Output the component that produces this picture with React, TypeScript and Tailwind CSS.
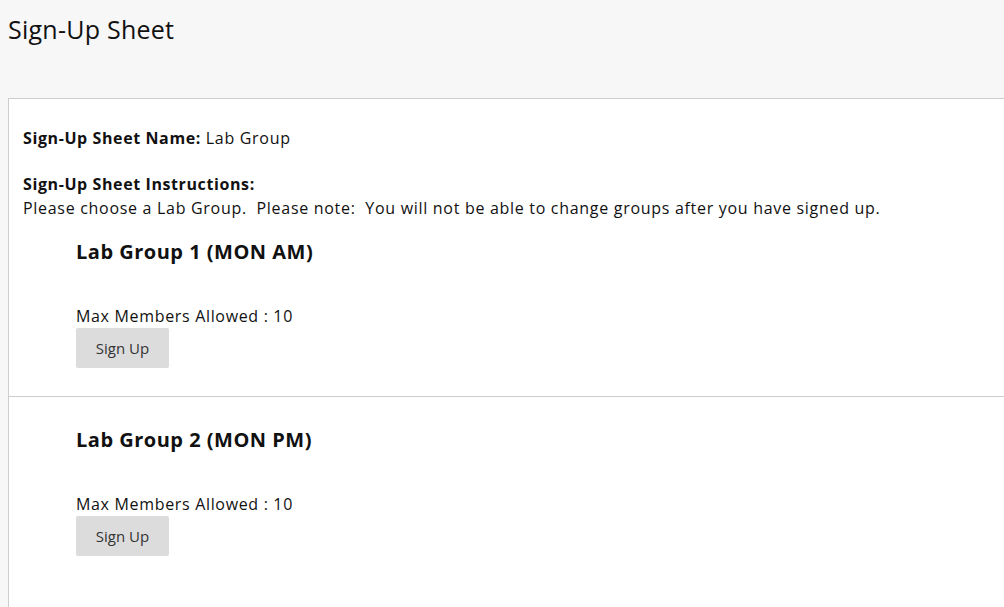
const groups = [
  { name: "Lab Group 1 (MON AM)", max: 10 },
  { name: "Lab Group 2 (MON PM)", max: 10 },
];

export default function App() {
  return (
    <div
      className="h-[607px] w-full overflow-hidden bg-[#f7f7f7] text-[#111]"
      style={{ fontFamily: '"Open Sans", "Liberation Sans", sans-serif' }}
    >
      <h1 className="px-2 pt-[12px] text-[25px] leading-[35px] font-normal tracking-[0.25px]">Sign-Up Sheet</h1>

      <div className="mt-[51px] ml-2 h-[600px] border-t border-l border-[#cdcdcd] bg-white">
        <div className="pt-[27px] pl-[14px] text-[16px] leading-[24px] tracking-[0.7px]">
          <p>
            <span className="font-bold tracking-[0.6px]">Sign-Up Sheet Name:</span> Lab Group
          </p>
          <p className="mt-[22px] font-bold tracking-[0.6px]">Sign-Up Sheet Instructions:</p>
          <p>
            Please choose a Lab Group.&nbsp; Please note:&nbsp; You will not be able to change groups after
            you have signed up.
          </p>
        </div>

        {groups.map((g, i) => (
          <div
            key={g.name}
            className={
              i === 0
                ? "pt-[18px] pb-[28px] pl-[67px]"
                : "border-t border-[#cdcdcd] pt-[29px] pb-[28px] pl-[67px]"
            }
          >
            <h2 className="text-[20px] leading-[28px] font-bold tracking-[0.5px]">{g.name}</h2>
            <p className="mt-[38px] text-[16px] leading-[24px] tracking-[0.67px]">
              Max Members Allowed : {g.max}
            </p>
            <button className="h-10 w-[93px] rounded-[2px] bg-[#dcdcdc] text-[15px] text-[#333]">
              Sign Up
            </button>
          </div>
        ))}
      </div>
    </div>
  );
}
